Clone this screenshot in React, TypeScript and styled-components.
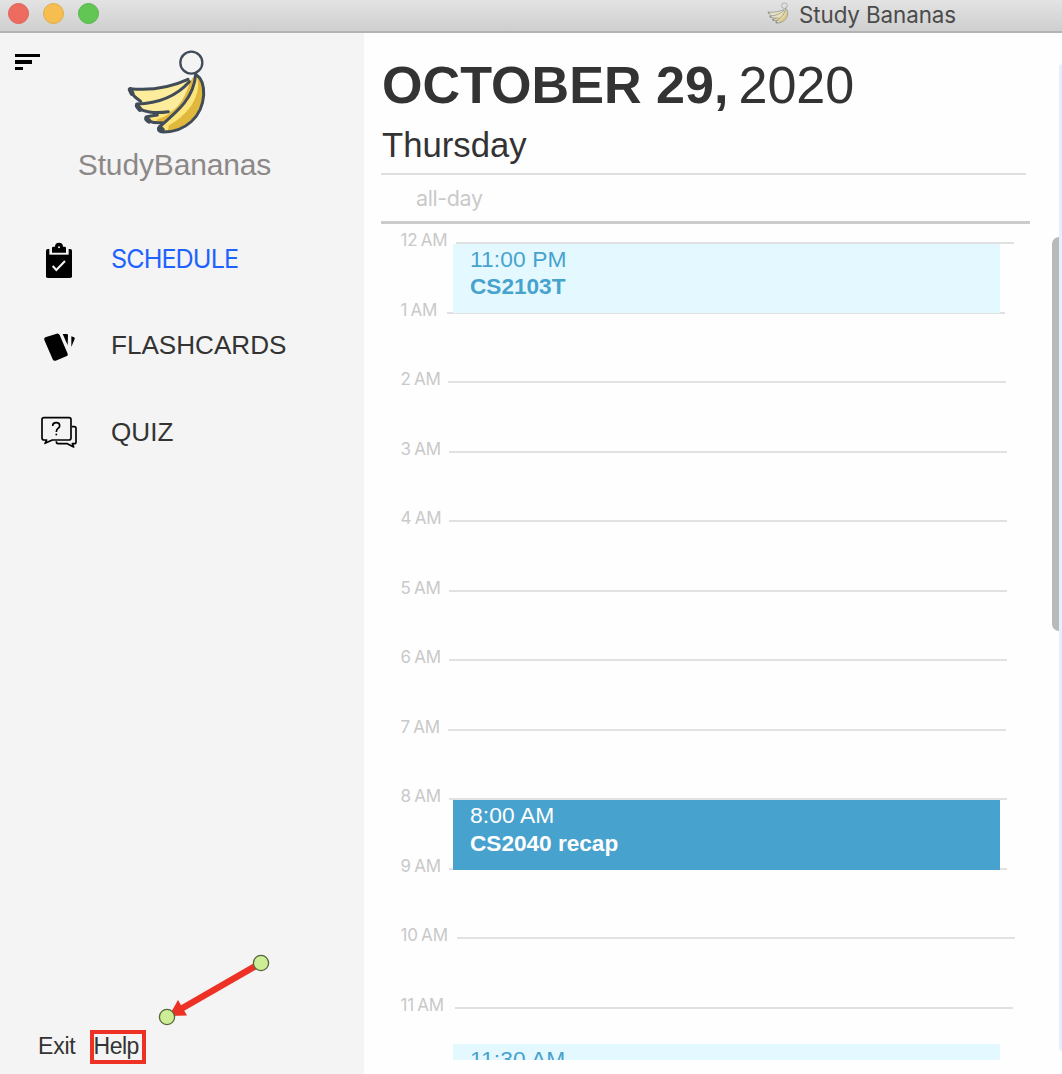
import React from "react";
import styled, { createGlobalStyle } from "styled-components";

const sans = `"Liberation Sans", Arial, sans-serif`;
const ui = `Inter, "Liberation Sans", sans-serif`;

const GlobalStyle = createGlobalStyle`
  html, body { margin: 0; padding: 0; overflow: hidden; }
  *, *::before, *::after { box-sizing: border-box; }
`;

const Window = styled.div`
  position: relative;
  display: flex;
  flex-direction: column;
  width: 1062px;
  height: 1074px;
  overflow: hidden;
  background: #fefefe;
  color: #333;
  font-family: ${sans};
`;

const TitleBar = styled.header`
  display: flex;
  align-items: flex-start;
  height: 33px;
  flex: none;
  padding-left: 8px;
  background: linear-gradient(#e3e3e3, #cfcfcf);
  border-bottom: 2px solid #b3b3b3;
`;

const Lights = styled.div`
  display: flex;
  gap: 14px;
  padding-top: 3px;
  width: 755px;
`;

const Light = styled.span<{ $fill: string; $edge: string }>`
  width: 21px;
  height: 21px;
  border-radius: 50%;
  background: ${(p) => p.$fill};
  border: 1px solid ${(p) => p.$edge};
`;

const TitleText = styled.span`
  margin-left: 7px;
  font: 400 22.4px/29px ${ui};
  letter-spacing: -0.1px;
  color: #4b4b4b;
  white-space: nowrap;
`;

const Body = styled.div`
  display: flex;
  flex: 1;
  min-height: 0;
`;

const Sidebar = styled.aside`
  display: flex;
  flex-direction: column;
  width: 364px;
  flex: none;
  background: #f4f4f4;
`;

const SidebarTop = styled.div`
  display: flex;
  height: 107px;
  padding: 7px 0 0 15px;
`;

const Menu = styled.div`
  display: flex;
  flex-direction: column;
  gap: 3px;
  width: 95px;
  padding-top: 14px;
`;

const MenuBar = styled.span<{ $w: number; $h?: number }>`
  width: ${(p) => p.$w}px;
  height: ${(p) => p.$h ?? 3}px;
  background: #000;
`;

const Brand = styled.div`
  width: 349px;
  height: 50px;
  text-align: center;
  font-size: 30px;
  line-height: 49px;
  letter-spacing: -0.15px;
  color: #8c8888;
`;

const Nav = styled.nav`
  display: flex;
  flex-direction: column;
  padding: 26px 0 0 41px;
`;

const NavItem = styled.a<{ $active?: boolean }>`
  display: flex;
  align-items: center;
  height: 86.6px;
  gap: 34px;
  color: ${(p) => (p.$active ? "#1f62ff" : "#333")};
  font-family: ${(p) => (p.$active ? ui : sans)};
  font-size: ${(p) => (p.$active ? 25.2 : 26.1)}px;
  line-height: ${(p) => (p.$active ? 28 : 30)}px;
  letter-spacing: ${(p) => (p.$active ? -0.95 : 0)}px;
  svg { flex: none; position: relative; top: 2px; }
`;

const NavText = styled.span<{ $lift?: number }>`
  padding-bottom: ${(p) => p.$lift ?? 0}px;
`;

const Footer = styled.div`
  display: flex;
  align-items: center;
  gap: 14px;
  height: 34px;
  margin-top: auto;
  margin-bottom: 10px;
  padding-left: 38px;
  font-size: 23px;
`;

const ExitLink = styled.a`
  padding-bottom: 2px;
  line-height: 30px;
  letter-spacing: -0.2px;
`;

const HelpLink = styled.a`
  width: 56px;
  height: 34px;
  border: 4px solid #ed3124;
  line-height: 25px;
  letter-spacing: -0.5px;
  white-space: nowrap;
`;

const Main = styled.main`
  display: flex;
  flex-direction: column;
  width: 687px;
  padding-left: 17px;
`;

const DateTitle = styled.h1`
  display: flex;
  gap: 10px;
  height: 86px;
  margin: 0;
  padding-left: 1px;
  font-size: 52.1px;
  line-height: 104px;
  font-weight: 700;
  white-space: nowrap;
`;

const Year = styled.span`
  font-weight: 400;
`;

const Weekday = styled.h2`
  height: 54px;
  margin: 0;
  padding-left: 1px;
  width: 645px;
  font-size: 34.7px;
  line-height: 53px;
  font-weight: 400;
`;

const AllDay = styled.div`
  width: 649px;
  height: 51px;
  border-bottom: 3px solid #cbcbcb;
  font: 400 21.5px/46px ${ui};
  letter-spacing: -0.4px;
  color: #cacaca;
`;

const AllDayLabel = styled.div`
  width: 645px;
  height: 48px;
  padding-left: 35px;
  border-top: 2px solid #dedede;
`;

const Timeline = styled.section`
  position: relative;
  height: 836px;
  padding-left: 19.5px;
  overflow: hidden;
`;

const HourRow = styled.div`
  display: flex;
  align-items: flex-start;
  gap: 8px;
  height: 69.55px;
  padding-top: 6px;
  color: #c9c9c9;
  font: 400 17px/20px ${ui};
  letter-spacing: -0.2px;
  word-spacing: -1.2px;
  white-space: nowrap;
`;

const HourLabel = styled.span<{ $w: number }>`
  width: ${(p) => p.$w}px;
`;

const HourLine = styled.span`
  width: 558px;
  height: 2px;
  margin-top: 12px;
  background: #e1e1e1;
`;

const Event = styled.article<{ $top: number; $solid?: boolean }>`
  position: absolute;
  left: 72px;
  top: ${(p) => p.$top}px;
  width: 547px;
  height: ${(p) => (p.$solid ? 70 : 69)}px;
  padding: ${(p) => (p.$solid ? 1 : 0.5)}px 0 0 17px;
  font-size: 22.8px;
  line-height: 28px;
  background: ${(p) => (p.$solid ? "#48a2ce" : "#e4f9ff")};
  color: ${(p) => (p.$solid ? "#fff" : "#48a2ce")};
`;

const EventTime = styled.div`
  letter-spacing: 0.1px;
`;

const EventTitle = styled.div`
  padding-top: 0.6px;
  font-size: 22.6px;
  font-weight: 700;
`;

const ScrollTrack = styled.div`
  width: 8px;
  padding-top: 204px;
`;

const ScrollThumb = styled.div`
  height: 394px;
  margin-left: 1px;
  border-radius: 8px 0 0 8px;
  background: #b8baba;
`;

const EdgePanel = styled.div`
  width: 3px;
  height: 987px;
  margin-top: 31px;
  background: #e3f1ff;
  border-radius: 3px 0 0 3px;
`;

const Pointer = styled.svg`
  position: absolute;
  left: 150px;
  top: 950px;
`;

const BananaLogo = ({ width, height, faded }: { width: number; height: number; faded?: boolean }) => (
  <svg width={width} height={height} viewBox="0 0 330 300" opacity={faded ? 0.5 : 1} preserveAspectRatio="none">
    <path d="M60 147C120 152 185 140 235 118L245 122C210 165 155 184 91 187C83 180 65 172 60 147Z" fill="#fdec9c" />
    <path d="M82 193C150 190 215 165 252 112L245 155L184 216C145 220 95 222 82 193Z" fill="#fdec9c" />
    <path d="M112 232L180 214L211 199L158 250C136 251 115 252 112 232Z" fill="#fde57c" />
    <path d="M240 125L254 106L243 155L194 218L160 249L138 241C154 232 172 229 182 216C212 196 229 163 240 125Z" fill="#e2b83c" />
    <path d="M256 103C250 172 204 212 152 261C148 269 150 275 160 275C225 275 275 229 280 165C281 137 276 116 256 103Z" fill="#fce67b" />
    <path d="M261 109C278 177 223 231 176 257L174 272C237 264 275 213 277 165C278 139 272 121 261 109Z" fill="#e2b83c" />
    <g fill="none" stroke="#414c58" strokeWidth="9" strokeLinecap="round" strokeLinejoin="round">
      <path d="M60 146C120 152 184 141 234 118" />
      <path d="M61 150C66 168 78 172 92 184" />
      <path d="M80 192C148 190 202 165 238 125" />
      <path d="M80 195C88 219 142 220 175 215" />
      <path d="M108 231C120 228 130 227 142 225" />
      <path d="M108 234C112 246 134 249 156 248" />
      <path d="M257 103C252 172 206 212 148 261C142 269 147 276 160 276C227 276 277 229 281 165C282 137 277 116 257 103Z" />
    </g>
    <path d="M61 149L66 160M82 198L90 208M110 237L117 243M150 264L157 270" fill="none" stroke="#414c58" strokeWidth="15" strokeLinecap="round" />
    <circle cx="244" cy="68" r="33" fill="none" stroke="#414c58" strokeWidth="7" />
  </svg>
);

const ScheduleIcon = () => (
  <svg width="36" height="40" viewBox="33 33 108 120">
    <rect x="48" y="57" width="78" height="87" rx="5" />
    <path d="M58 53H116V74H58Z" fill="#f4f4f4" />
    <path d="M66 68V54Q66 50 70 50H75A12 12 0 0 1 99 50H104Q108 50 108 54V68Z" />
    <circle cx="87" cy="52" r="3" fill="#f4f4f4" />
    <path d="M68 108L79 120L105 93" fill="none" stroke="#f4f4f4" strokeWidth="6" />
  </svg>
);

const CardsIcon = () => (
  <svg width="36" height="40" viewBox="33 293 108 120">
    <path d="M46 321L80 310Q86 308 89 314L113 370Q115 376 109 378L77 391Q71 393 68 387L43 329Q41 323 46 321Z" />
    <path d="M98 311H110Q114 311 114 315L113 345Z" />
    <path d="M124 318L132 321Q135 322 134 326L124 350Z" />
  </svg>
);

const QuizIcon = () => (
  <svg width="36" height="40" viewBox="33 552 108 120" fill="none" stroke="#000" strokeWidth="5" strokeLinejoin="round">
    <path d="M42 563H117Q123 563 123 569V624Q123 630 117 630H67L45 640L50 630H42Q36 630 36 624V569Q36 563 42 563Z" />
    <path d="M126 590H133Q138 590 138 595V635Q138 641 133 641H127L131 651L112 641H84Q79 641 79 634" />
    <path d="M68 588Q68 578 79 578Q89 578 89 587Q89 592 84 595Q79 599 79 606" />
    <path d="M79 611V616" />
  </svg>
);

const hours: [string, number][] = [
  ["12 AM", 47.5], ["1 AM", 38.5], ["2 AM", 39.8], ["3 AM", 40.4], ["4 AM", 40.4], ["5 AM", 40.4],
  ["6 AM", 40.4], ["7 AM", 39.8], ["8 AM", 40.4], ["9 AM", 40.4], ["10 AM", 48.5], ["11 AM", 46],
];

export default function App() {
  return (
    <Window>
      <GlobalStyle />
      <TitleBar>
        <Lights>
          <Light $fill="#ed6b5f" $edge="#df6057" />
          <Light $fill="#f6be50" $edge="#e0ad48" />
          <Light $fill="#62c655" $edge="#55b548" />
        </Lights>
        <BananaLogo width={29} height={25} faded />
        <TitleText>Study Bananas</TitleText>
      </TitleBar>
      <Body>
        <Sidebar>
          <SidebarTop>
            <Menu>
              <MenuBar $w={25} />
              <MenuBar $w={17} $h={4} />
              <MenuBar $w={8} />
            </Menu>
            <BananaLogo width={110} height={100} />
          </SidebarTop>
          <Brand>StudyBananas</Brand>
          <Nav>
            <NavItem $active><ScheduleIcon /><NavText>SCHEDULE</NavText></NavItem>
            <NavItem><CardsIcon /><NavText $lift={1}>FLASHCARDS</NavText></NavItem>
            <NavItem><QuizIcon /><NavText>QUIZ</NavText></NavItem>
          </Nav>
          <Footer>
            <ExitLink>Exit</ExitLink>
            <HelpLink>Help</HelpLink>
          </Footer>
        </Sidebar>
        <Main>
          <DateTitle>OCTOBER 29,<Year>2020</Year></DateTitle>
          <Weekday>Thursday</Weekday>
          <AllDay><AllDayLabel>all-day</AllDayLabel></AllDay>
          <Timeline>
            {hours.map(([label, w]) => (
              <HourRow key={label}>
                <HourLabel $w={w}>{label}</HourLabel>
                <HourLine />
              </HourRow>
            ))}
            <Event $top={20}><EventTime>11:00 PM</EventTime><EventTitle>CS2103T</EventTitle></Event>
            <Event $top={576} $solid><EventTime>8:00 AM</EventTime><EventTitle>CS2040 recap</EventTitle></Event>
            <Event $top={820}><EventTime>11:30 AM</EventTime></Event>
          </Timeline>
        </Main>
        <ScrollTrack><ScrollThumb /></ScrollTrack>
        <EdgePanel />
      </Body>
      <Pointer width="130" height="80" viewBox="150 950 130 80">
        <path d="M261 963L180 1009.500" stroke="#ed3124" strokeWidth="6.500" />
        <path d="M169 1016L178 1000L187 1015.500Z" fill="#ed3124" />
        <g fill="#cdee95" stroke="#526638" strokeWidth="1.3">
          <circle cx="261" cy="963" r="7.6" />
          <circle cx="167" cy="1017" r="7.6" />
        </g>
      </Pointer>
    </Window>
  );
}
